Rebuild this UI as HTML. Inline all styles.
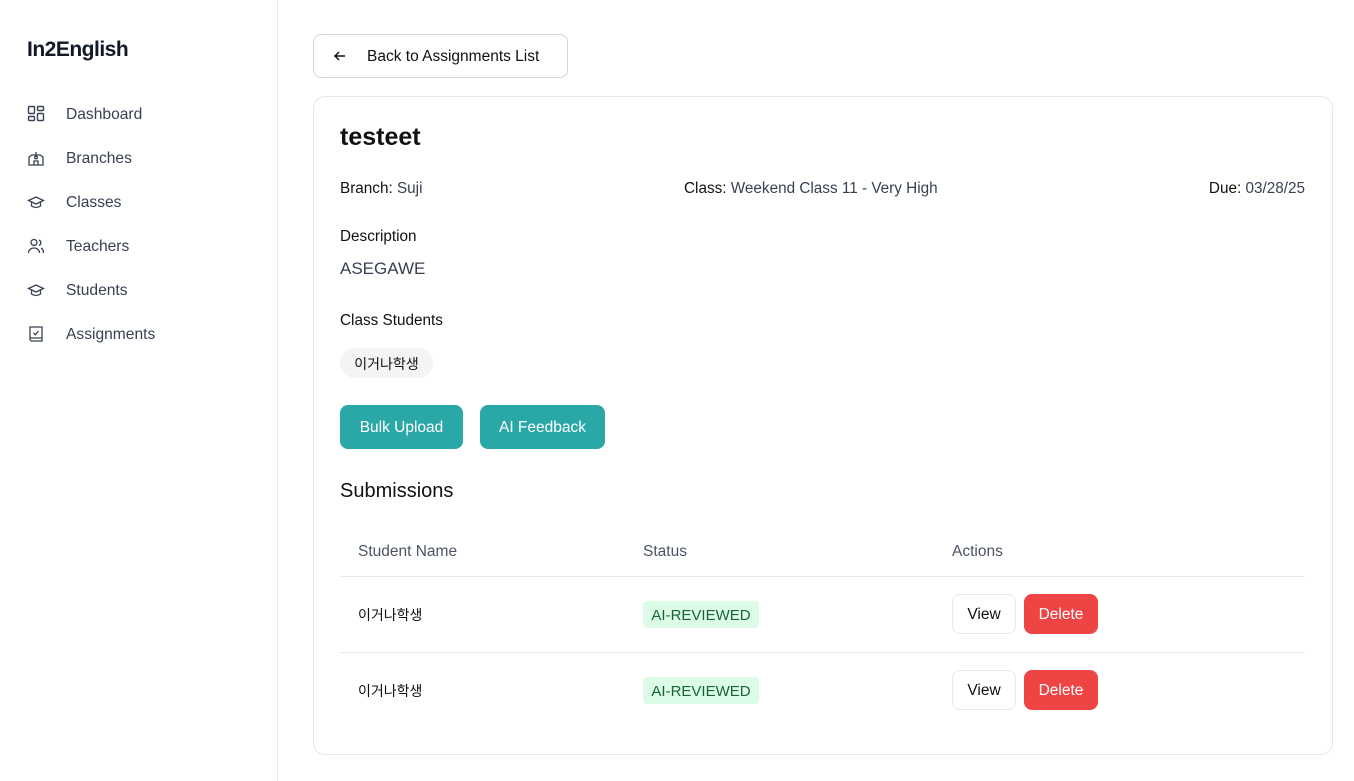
<!DOCTYPE html>
<html><head><meta charset="utf-8"><style>
*{box-sizing:border-box;margin:0;padding:0}
body{width:1354px;height:781px;background:#fff;font-family:"Liberation Sans","Noto Sans CJK KR",sans-serif;color:#111;position:relative;overflow:hidden}
.side{position:absolute;left:0;top:0;width:278px;height:781px;border-right:1px solid #e5e7eb}
.logo{position:absolute;left:27px;top:38px;font-size:21px;font-weight:bold;color:#111827;letter-spacing:-0.5px}
.nav{position:absolute;left:27px;font-size:15.6px;color:#374151}
.nav svg{position:absolute;left:0;top:-1px}
.nav span{position:absolute;left:39px;top:0;white-space:nowrap}
.abs{position:absolute;white-space:nowrap}
.btn{position:absolute;border-radius:8px;font-size:15.5px;display:flex;align-items:center;justify-content:center;padding-top:2px}
</style></head><body>
<div class="side">
<div class="logo">In2English</div>
<div class="nav" style="top:106px"><svg width="18" height="18" viewBox="0 0 18 18" fill="none" stroke="#374151" stroke-width="1.4"><rect x="1.5" y="1.5" width="6" height="7" rx="1"/><rect x="10.5" y="1.5" width="6" height="4" rx="1"/><rect x="10.5" y="8.5" width="6" height="7" rx="1"/><rect x="1.5" y="11.5" width="6" height="4" rx="1"/></svg><span>Dashboard</span></div>
<div class="nav" style="top:150px"><svg width="18" height="18" viewBox="0 0 18 18" fill="none" stroke="#374151" stroke-width="1.3"><path d="M2 16V8l3-2h8l3 2v8zM7 16v-4h4v4M9 6V3"/><circle cx="9" cy="8.5" r="1.3"/></svg><span>Branches</span></div>
<div class="nav" style="top:194px"><svg width="18" height="18" viewBox="0 0 18 18" fill="none" stroke="#374151" stroke-width="1.3"><path d="M1.5 7.5L9 4l7.5 3.5L9 11zM4.5 9v4c3 2 6 2 9 0V9"/></svg><span>Classes</span></div>
<div class="nav" style="top:238px"><svg width="18" height="18" viewBox="0 0 18 18" fill="none" stroke="#374151" stroke-width="1.3"><circle cx="7" cy="5.5" r="3"/><path d="M1.5 16c0-3 2.5-5 5.5-5s5.5 2 5.5 5M12 3a3 3 0 010 5.5M14 11c1.5.8 2.5 2.5 2.5 5"/></svg><span>Teachers</span></div>
<div class="nav" style="top:282px"><svg width="18" height="18" viewBox="0 0 18 18" fill="none" stroke="#374151" stroke-width="1.3"><path d="M1.5 7.5L9 4l7.5 3.5L9 11zM4.5 9v4c3 2 6 2 9 0V9"/></svg><span>Students</span></div>
<div class="nav" style="top:326px"><svg width="18" height="18" viewBox="0 0 18 18" fill="none" stroke="#374151" stroke-width="1.3"><path d="M3 2h12v14H5a2 2 0 01-2-2zM3 13h12M6.5 8l1.8 1.8L11.5 6"/></svg><span>Assignments</span></div>
</div>
<div style="position:absolute;left:313px;top:34px;width:255px;height:44px;border:1px solid #d1d5db;border-radius:8px"><svg width="16" height="16" viewBox="0 0 16 16" style="position:absolute;left:18px;top:13px" fill="none" stroke="#111" stroke-width="1.5"><path d="M13 8H3M7 4L3 8l4 4"/></svg><span class="abs" style="left:53px;top:13px;font-size:15.5px">Back to Assignments List</span></div>
<div style="position:absolute;left:313px;top:96px;width:1020px;height:659px;border:1px solid #e5e7eb;border-radius:12px"></div>
<div class="abs" style="left:340px;top:123px;font-size:25px;font-weight:bold">testeet</div>
<div class="abs" style="left:340px;top:180px;font-size:15.3px;color:#374151"><span style="color:#111">Branch:</span> Suji</div>
<div class="abs" style="left:684px;top:180px;font-size:15.3px;color:#374151"><span style="color:#111">Class:</span> Weekend Class 11 - Very High</div>
<div class="abs" style="right:49px;top:180px;font-size:15.3px;color:#374151"><span style="color:#111">Due:</span> 03/28/25</div>
<div class="abs" style="left:340px;top:228px;font-size:15.3px">Description</div>
<div class="abs" style="left:340px;top:259px;font-size:17px;color:#374151">ASEGAWE</div>
<div class="abs" style="left:340px;top:312px;font-size:15.3px">Class Students</div>
<div class="btn" style="left:340px;top:348px;width:93px;height:30px;border-radius:15px;background:#f3f4f6;font-size:14px">이거나학생</div>
<div class="btn" style="left:340px;top:405px;width:123px;height:44px;background:#2aa8a8;color:#fff">Bulk Upload</div>
<div class="btn" style="left:480px;top:405px;width:125px;height:44px;background:#2aa8a8;color:#fff">AI Feedback</div>
<div class="abs" style="left:340px;top:480px;font-size:20px">Submissions</div>
<div class="abs" style="left:358px;top:543px;font-size:15.5px;color:#4b5563">Student Name</div>
<div class="abs" style="left:643px;top:543px;font-size:15.5px;color:#4b5563">Status</div>
<div class="abs" style="left:952px;top:543px;font-size:15.5px;color:#4b5563">Actions</div>
<div style="position:absolute;left:340px;top:576px;width:965px;height:1px;background:#e5e7eb"></div>
<div style="position:absolute;left:340px;top:652px;width:965px;height:1px;background:#e5e7eb"></div>
<div class="abs" style="left:358px;top:605px;font-size:14px">이거나학생</div>
<div class="btn" style="left:643px;top:601px;width:116px;height:27px;border-radius:4px;background:#dcfce7;color:#166534;font-size:15px">AI-REVIEWED</div>
<div class="btn" style="left:952px;top:594px;width:64px;height:40px;border:1px solid #e5e7eb">View</div>
<div class="btn" style="left:1024px;top:594px;width:74px;height:40px;background:#ef4444;color:#fff">Delete</div>
<div class="abs" style="left:358px;top:681px;font-size:14px">이거나학생</div>
<div class="btn" style="left:643px;top:677px;width:116px;height:27px;border-radius:4px;background:#dcfce7;color:#166534;font-size:15px">AI-REVIEWED</div>
<div class="btn" style="left:952px;top:670px;width:64px;height:40px;border:1px solid #e5e7eb">View</div>
<div class="btn" style="left:1024px;top:670px;width:74px;height:40px;background:#ef4444;color:#fff">Delete</div>
</body></html>
